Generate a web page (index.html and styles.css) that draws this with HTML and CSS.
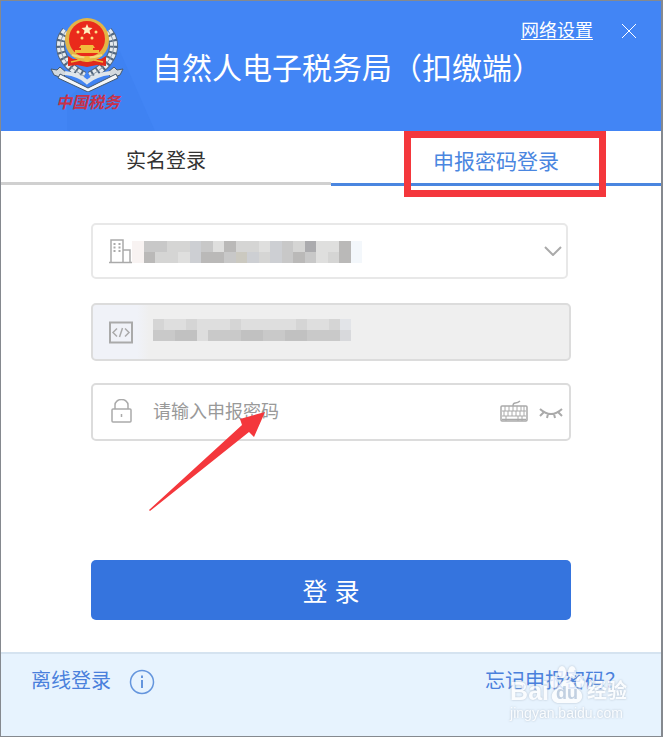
FILE: index.html
```
<!DOCTYPE html>
<html lang="zh-CN">
<head>
  <meta charset="utf-8">
  <meta name="viewport" content="width=device-width, initial-scale=1">
  <title>自然人电子税务局（扣缴端）</title>
  <link rel="stylesheet" href="styles.css">
</head>
<body>
<div class="window">

  <header class="header">
    <div class="brand">
      <svg class="emblem" viewBox="0 0 76 76" aria-hidden="true">
        <!-- wreath -->
        <g fill="none">
          <path d="M16 15C6 27 8 46 34 60M58 15C68 27 66 46 40 60" stroke="#53677f" stroke-width="9"/>
          <path d="M16 15C6 27 8 46 34 60M58 15C68 27 66 46 40 60" stroke="#e6ebef" stroke-width="7" stroke-dasharray="4 2"/>
          <path d="M16 15C6 27 8 46 34 60M58 15C68 27 66 46 40 60" stroke="#8594a3" stroke-width="1"/>
        </g>
        <!-- key and spanner ends, open book -->
        <path d="M1 53l6 1 3-3 7 6-5 5-8-3zM73 53l-6 1-3-3-7 6 5 5 8-3z" fill="#d3d9de" stroke="#465a70"/>
        <path d="M10 58l28 14 28-14 2 4-30 14L8 62z" fill="#f4f6f8" stroke="#42576e"/>
        <path d="M15 57c9 1 17 4 22 9 6-5 14-8 23-9" fill="none" stroke="#dfe5ea" stroke-width="4"/>
        <!-- national emblem -->
        <path d="M18 40l5 3h28l5-3v10l-9-1-10 2-10-2-9 1z" fill="#df2a1d"/>
        <ellipse cx="37" cy="24" rx="22" ry="22" fill="#e3b546"/>
        <ellipse cx="37" cy="23" rx="18" ry="18" fill="#ea2a1b"/>
        <path d="M37 8l1.500 3.500 4 .4-3 2.600 1 4-3.500-2-3.500 2 1-4-3-2.600 4-.4z" fill="#fff0c0"/>
        <g fill="#ffdf86">
          <circle cx="28" cy="16" r="1.500"/><circle cx="32" cy="22" r="1.500"/>
          <circle cx="42" cy="22" r="1.500"/><circle cx="46" cy="16" r="1.500"/>
        </g>
        <path d="M31 29h12l2 3h-2v2h6v3H25v-3h6v-2h-2z" fill="#f1bd3c"/>
        <path d="M22 39q15 5 30 0" fill="none" stroke="#f3d879" stroke-width="2"/>
        <circle cx="37" cy="43" r="3" fill="#f0bb3b"/>
        <path d="M21 46l9-2M53 46l-9-2" stroke="#f0bb3b" stroke-width="1.500"/>
      </svg>
      <span class="brand-name">中国税务</span>
    </div>
    <h1 class="title">自然人电子税务局（扣缴端）</h1>
    <div class="window-tools">
      <a class="settings" href="#">网络设置</a>
      <button class="close" type="button" aria-label="关闭">
        <svg viewBox="0 0 16 16" width="16" height="16"><path d="M1 1l14 14M15 1L1 15"/></svg>
      </button>
    </div>
  </header>

  <nav class="tabs">
    <button class="tab" type="button">实名登录</button>
    <button class="tab tab-active" type="button">申报密码登录<span class="highlight"></span></button>
  </nav>

  <form class="form">
    <div class="field field-company">
      <svg class="icon" viewBox="0 0 24 26" aria-hidden="true">
        <path d="M0 24.500h23M2 24V2h12v22M14 12h7v12" stroke-width="1.500"/>
        <path d="M4.500 6h2M9.500 6h2M4.500 9.500h2M9.500 9.500h2M4.500 13h2M9.500 13h2" stroke-width="2"/>
      </svg>
      <select class="control" aria-label="企业名称"><option></option></select>
      <svg class="mosaic mosaic-company" viewBox="0 0 20 2" preserveAspectRatio="none" shape-rendering="crispEdges" aria-hidden="true">
        <path fill="#f8f3f2" d="M0 0h1v2H0z"/>
        <path fill="#c8c8c8" d="M1 0h18v2H1z"/>
        <path fill="#d5d5d4" d="M3 0h2v1H3zM2 1h2v1H2zM9 0h2v1H9zM11 1h1v1h-1zM14 0h1v1h-1zM17 1h1v1h-1z"/>
        <path fill="#dfdfde" d="M7 0h1v1H7zM4 1h1v1H4zM11 0h1v1h-1zM16 0h2v1h-2zM16 1h1v1h-1z"/>
        <path fill="#bab9b8" d="M1 1h1v1H1zM6 1h2v1H6zM8 0h1v1H8zM14 1h1v1h-1zM18 0h1v2h-1z"/>
        <path fill="#ababae" d="M15 0h1v1h-1z"/>
        <path fill="#cdcfd3" d="M5 0h1v2H5zM10 1h1v1h-1zM12 0h1v2h-1z"/>
        <path fill="#cbc9c0" d="M9 1h1v1H9z"/>
        <path fill="#f3f7fb" d="M19 0h1v2h-1z"/>
      </svg>
      <svg class="chevron" viewBox="0 0 18 10" aria-hidden="true"><path d="M1 1l8 8 8-8"/></svg>
    </div>

    <div class="field field-code">
      <svg class="icon" viewBox="0 0 24 26" aria-hidden="true">
        <path d="M1 3.500h22v20H1z" stroke-width="2"/>
        <path d="M8 9.500l-4 4 4 4M16 9.500l4 4-4 4M13.500 9l-3 9" stroke-width="1.500"/>
      </svg>
      <input class="control" type="text" aria-label="纳税人识别号" readonly>
      <svg class="mosaic mosaic-code" viewBox="0 0 18 2" preserveAspectRatio="none" shape-rendering="crispEdges" aria-hidden="true">
        <path fill="#dedede" d="M0 0h17v1H0z"/>
        <path fill="#c9c9c9" d="M0 1h17v1H0z"/>
        <path fill="#d5d5d5" d="M0 0h1v1H0zM3 0h1v1H3zM7 0h1v1H7zM13 0h1v1h-1zM16 0h1v1h-1z"/>
        <path fill="#c1c1c1" d="M2 1h2v1H2zM8 1h2v1H8zM12 1h2v1h-2z"/>
        <path fill="#dddddd" d="M4 1h1v1H4z"/>
        <path fill="#e2e4e8" d="M17 0h1v1h-1z"/>
        <path fill="#d8d9dc" d="M17 1h1v1h-1z"/>
      </svg>
    </div>

    <div class="field field-password">
      <svg class="icon" viewBox="0 0 24 26" aria-hidden="true">
        <rect x="3" y="10" width="19" height="13" rx="1" stroke-width="1.500"/>
        <path d="M6 10V6a6.500 5.500 0 0113 0v4M12.500 15v3" stroke-width="1.500"/>
      </svg>
      <input class="control" type="password" placeholder="请输入申报密码" aria-label="申报密码">
      <button class="field-button" type="button" aria-label="软键盘">
        <svg viewBox="0 0 28 24" width="28" height="24">
          <rect x="1" y="6" width="26" height="15" rx="1" stroke-width="1.500"/>
          <path d="M2 11h24M2 16h24M5 6v5M9 6v5M13 6v5M17 6v5M21 6v5M24 6v5M4 11v5M8 11v5M12 11v5M16 11v5M20 11v5M24 11v5M6 16v5M18 16v5M22 16v5"/>
          <path d="M2 19.500h24M13 6c0-5 3-1 7-5" stroke-width="1.500"/>
        </svg>
      </button>
      <button class="field-button" type="button" aria-label="显示密码">
        <svg viewBox="0 0 24 24" width="24" height="24"><path d="M1 9q11 10 22 0M5 12l-4 4M9 14l-1 4M15 14l1 4M19 12l4 4" stroke-width="2"/></svg>
      </button>
    </div>

    <button class="submit" type="submit">登 录</button>

    <svg class="arrow" viewBox="0 0 118 100" aria-hidden="true"><path d="M0 98L93 13l-2-6L116 0 105 25l-5-5L1 99z"/></svg>
  </form>

  <footer class="footer">
    <a class="footer-link" href="#">离线登录</a>
    <svg class="info" viewBox="0 0 26 26" aria-hidden="true">
      <circle cx="13" cy="13" r="11.500"/><path d="M13 11v8M13 6.500v2.500" stroke-width="2"/>
    </svg>
    <a class="footer-link forgot" href="#">忘记申报密码？</a>
    <div class="watermark">
      <div class="watermark-brand">
        <span class="watermark-latin">Bai</span>
        <span class="paw">
          <svg viewBox="0 0 36 40" width="36" height="40" aria-hidden="true">
            <ellipse cx="5" cy="17" rx="4" ry="6"/><ellipse cx="13" cy="7" rx="4" ry="6"/>
            <ellipse cx="23" cy="7" rx="4" ry="6"/><ellipse cx="31" cy="17" rx="4" ry="6"/>
            <path d="M18 15c-6 0-7 6-12 10-6 5-3 13 4 13h16c7 0 10-8 4-13-5-4-6-10-12-10z"/>
          </svg>
          <b class="paw-text">du</b>
        </span>
        <span class="watermark-cjk">经验</span>
      </div>
      <div class="watermark-url">jingyan.baidu.com</div>
    </div>
  </footer>

</div>
</body>
</html>
```
FILE: styles.css
```
* { box-sizing: border-box; }

body {
  margin: 0;
  font-family: "Liberation Sans", "Noto Sans CJK SC", sans-serif;
  color: #333;
}

button, input, select { font-family: inherit; }
button { padding: 0; border: 0; background: none; cursor: pointer; }
svg { display: block; }

.window {
  display: flex;
  flex-direction: column;
  min-height: 100vh;
  border: 2px solid #85898f;
  border-width: 1px 2px 2px 1px;
  background: #fff;
}

/* header */
.header {
  position: relative;
  display: flex;
  height: 130px;
  padding-left: 49px;
  background: #4285f5;
  color: #fff;
}
.header::before {
  content: "";
  position: absolute;
  left: 66px;
  bottom: 0;
  width: 88px;
  height: 80px;
  background: #3f82f2;
  clip-path: polygon(0 60%, 60% 0, 100% 100%, 0 100%);
}
.brand {
  position: relative;
  width: 76px;
  padding-top: 15px;
}
.emblem { width: 76px; height: 76px; }
.brand-name {
  display: block;
  font-size: 16px;
  font-style: italic;
  font-weight: 700;
  line-height: 22px;
  text-align: center;
  color: #c8324a;
}
.title {
  margin: 46px 0 0 26px;
  font-size: 30px;
  font-weight: 400;
  line-height: 44px;
  white-space: nowrap;
}
.window-tools {
  position: absolute;
  top: 18px;
  right: 24px;
  display: flex;
  align-items: center;
  gap: 28px;
}
.settings {
  font-size: 18px;
  line-height: 24px;
  color: #fff;
  text-underline-offset: 2px;
}
.close svg { fill: none; stroke: #fff; }

/* tabs */
.tabs { display: flex; }
.tab {
  flex: 1;
  height: 54px;
  padding-top: 6px;
  border-bottom: 3px solid #d0d0d0;
  font-size: 20px;
  color: #333;
}
.tab-active {
  position: relative;
  height: 55px;
  border-color: #4a86e0;
  font-size: 21px;
  color: #4a86e0;
}
.highlight {
  position: absolute;
  top: 0;
  left: 73px;
  width: 202px;
  height: 66px;
  border: 7px solid #f4373c;
}

/* form */
.form {
  position: relative;
  flex: 1;
  width: calc(100% - 40px);
  max-width: 480px;
  margin: 0 auto;
  padding: 37px 0 32px;
}
.field {
  position: relative;
  display: flex;
  align-items: center;
  height: 58px;
  padding: 0 6px 0 16px;
  border: 2px solid #dcdcdc;
  border-radius: 5px;
}
.field-company {
  height: 56px;
  margin: 0 3px 24px 0;
  border-color: #e8e8e8;
}
.field-code {
  margin-bottom: 22px;
  background: linear-gradient(90deg, #f0f2f8 44px, #efefef 56px);
}
.field-password { margin-bottom: 119px; }
.icon {
  flex: none;
  width: 24px;
  height: 26px;
  fill: none;
  stroke: #aaa;
}
.control {
  flex: 1;
  min-width: 0;
  height: 100%;
  padding: 0 0 0 20px;
  border: 0;
  outline: 0;
  appearance: none;
  background: transparent;
  font-size: 18px;
}
.control::placeholder { color: #999; }
.mosaic { position: absolute; height: 22px; }
.mosaic-company { left: 39px; top: 16px; width: 230px; }
.mosaic-code { left: 60px; top: 14px; width: 198px; }
.chevron {
  position: absolute;
  right: 4px;
  width: 18px;
  height: 10px;
  fill: none;
  stroke: #aaa;
  stroke-width: 2;
  pointer-events: none;
}
.field-button { margin-left: 11px; }
.field-button svg { fill: none; stroke: #aaa; }
.submit {
  display: block;
  width: 100%;
  height: 60px;
  border-radius: 5px;
  background: #3574de;
  font-size: 25px;
  color: #fff;
}
.arrow {
  position: absolute;
  left: 58px;
  top: 226px;
  width: 118px;
  height: 100px;
  fill: #f4373c;
  pointer-events: none;
}

/* footer */
.footer {
  position: relative;
  display: flex;
  align-items: flex-start;
  height: 84px;
  padding: 13px 36px 0 30px;
  border-top: 2px solid #d5e3f0;
  background: #e7f3fe;
}
.footer-link {
  font-size: 20px;
  line-height: 28px;
  color: #4a80dc;
  text-decoration: none;
}
.forgot { margin-left: auto; }
.info {
  width: 26px;
  height: 26px;
  margin: 2px 0 0 18px;
  fill: none;
  stroke: #6495dd;
  stroke-width: 1.5;
}

/* watermark */
.watermark {
  position: absolute;
  right: 34px;
  top: 11px;
  color: #fff;
  filter: drop-shadow(0 0 1px #a9b4c2);
  opacity: .8;
  pointer-events: none;
}
.watermark-brand { display: flex; align-items: flex-end; height: 40px; }
.watermark-latin { font-size: 25px; font-weight: 700; line-height: 28px; }
.watermark-cjk { margin-left: 2px; font-size: 20px; font-weight: 700; line-height: 28px; }
.paw { position: relative; fill: #fff; }
.paw-text {
  position: absolute;
  left: 0;
  right: 0;
  bottom: 2px;
  font-size: 18px;
  line-height: 20px;
  text-align: center;
  color: #b9c8db;
}
.watermark-url { font-size: 14px; line-height: 16px; }
```
